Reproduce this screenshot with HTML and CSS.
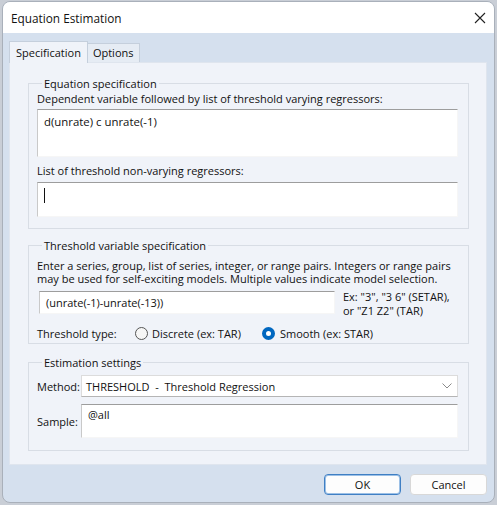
FILE: index.html
```html
<!DOCTYPE html>
<html lang="en">

<head>
    <meta charset="UTF-8">
    <meta name="viewport" content="width=device-width, initial-scale=1.0">
    <title>Equation Estimation</title>
    <link rel="stylesheet" href="styles.css">
</head>

<body>
    <div class="dialog">
        <!-- Title bar -->
        <div class="titlebar">
            <span class="title">Equation Estimation</span>
            <span class="close">
                <svg width="12" height="12" viewBox="0 0 12 12">
                    <path d="M1 1 L11 11 M11 1 L1 11" stroke="#222" stroke-width="1.1" fill="none" />
                </svg>
            </span>
        </div>

        <!-- Tabs -->
        <div class="tabs">
            <div class="tab active">Specification</div>
            <div class="tab">Options</div>
        </div>

        <div class="tab-page">
            <fieldset class="group group-eq">
                <legend>Equation specification</legend>
                <div class="label">Dependent variable followed by list of threshold varying regressors:</div>
                <div class="textbox tall">d(unrate) c unrate(-1)</div>
                <div class="label second">List of threshold non-varying regressors:</div>
                <div class="textbox short"><span class="caret"></span></div>
            </fieldset>

            <fieldset class="group group-thr">
                <legend>Threshold variable specification</legend>
                <div class="desc">Enter a series, group, list of series, integer, or range pairs. Integers or range pairs may be used for self-exciting models. Multiple values indicate model selection.</div>
                <div class="thr-row">
                    <div class="textbox line">(unrate(-1)-unrate(-13))</div>
                    <div class="hint">Ex: "3", "3 6" (SETAR),<br>or "Z1 Z2" (TAR)</div>
                </div>
                <div class="type-row">
                    <span class="type-label">Threshold type:</span>
                    <span class="radio"><span class="dot"></span>Discrete (ex: TAR)</span>
                    <span class="radio checked"><span class="dot"></span>Smooth (ex: STAR)</span>
                </div>
            </fieldset>

            <fieldset class="group group-est">
                <legend>Estimation settings</legend>
                <div class="field-row">
                    <span class="field-label">Method:</span>
                    <div class="select">
                        <span>THRESHOLD &nbsp;- &nbsp;Threshold Regression</span>
                        <svg width="10" height="6" viewBox="0 0 10 6">
                            <path d="M0.5 0.5 L5 5 L9.5 0.5" stroke="#8a8a8a" stroke-width="1" fill="none" />
                        </svg>
                    </div>
                </div>
                <div class="field-row sample-row">
                    <span class="field-label">Sample:</span>
                    <div class="textbox sample">@all</div>
                </div>
            </fieldset>
        </div>

        <div class="buttons">
            <button class="btn default">OK</button>
            <button class="btn">Cancel</button>
        </div>
    </div>
</body>

</html>
```

FILE: styles.css
```css
body {
    margin: 0;
    background-color: #c9ced6;
    font-family: "Open Sans", "Noto Sans", sans-serif;
    font-size: 11px;
    color: #111;
}

.dialog {
    margin: 1px 0 0 2px;
    width: 491px;
    height: 500px;
    border: 1px solid #a9b0ba;
    border-radius: 8px;
    overflow: hidden;
    background-color: #d5e0ee;
    display: flex;
    flex-direction: column;
}

.titlebar {
    height: 31px;
    background-color: #ffffff;
    display: flex;
    justify-content: space-between;
    align-items: center;
    padding: 0 8px 0 8px;
}

.title {
    font-size: 11.8px;
}

.close {
    display: flex;
}

.tabs {
    display: flex;
    align-items: flex-end;
    padding: 8px 0 0 6px;
    height: 21px;
}

.tab {
    padding: 0 5px;
    height: 18px;
    line-height: 18px;
    background-color: #e6ecf4;
    border: 1px solid #c5cfdc;
    border-bottom: none;
    border-left: none;
}

.tab.active {
    height: 21px;
    line-height: 21px;
    padding: 0 6px;
    background-color: #f0f3f9;
    border-left: 1px solid #c5cfdc;
    position: relative;
    z-index: 1;
    margin-bottom: -1px;
}

.tab-page {
    margin: 0 7px 0 6px;
    height: 388px;
    background-color: #f0f3f9;
    border: 1px solid #dfe5ee;
    padding: 13px 17px 0 18px;
}

.group {
    margin: 0 0 9px 0;
    padding: 0 10px 0 8px;
    border: 1px solid #d8dde5;
    min-width: 0;
}

.group legend {
    padding: 0 2px;
    margin-left: 5px;
    font-size: 11px;
    line-height: 15px;
}

.label {
    line-height: 15px;
    margin-top: 0;
}

.label.second {
    margin-top: 6px;
}

.textbox {
    background-color: #ffffff;
    border-top: 1px solid #9d9d9d;
    border-left: 1px solid #c9c9c9;
    border-right: 1px solid #f6f6f6;
    border-bottom: 1px solid #f6f6f6;
    font-size: 11.4px;
    padding: 4px 6px;
}

.textbox.tall {
    margin-top: 3px;
    height: 38px;
}

.textbox.short {
    margin-top: 4px;
    height: 25px;
    margin-bottom: 11px;
}

.caret {
    display: inline-block;
    width: 1px;
    height: 15px;
    background-color: #111;
    vertical-align: middle;
}

.group-thr {
    margin-bottom: 11px;
}

.desc {
    line-height: 13px;
    margin-top: 6px;
}

.thr-row {
    display: flex;
    align-items: flex-start;
    margin-top: 6px;
}

.textbox.line {
    width: 282px;
    height: 13px;
    line-height: 13px;
    margin-left: 2px;
    padding: 4px 6px;
    font-size: 11px;
}

.hint {
    line-height: 14px;
    margin-left: 8px;
    margin-top: -1px;
}

.type-row {
    display: flex;
    align-items: center;
    margin: 6px 0 1px 0;
    height: 18px;
}

.type-label {
    width: 98px;
}

.radio {
    display: flex;
    align-items: center;
    width: 127px;
}

.radio .dot {
    width: 11px;
    height: 11px;
    border: 1px solid #555;
    border-radius: 50%;
    margin-right: 4px;
    background-color: #f6f6f6;
}

.radio.checked .dot {
    width: 5px;
    height: 5px;
    border: 4px solid #0067c0;
    background-color: #ffffff;
    margin-right: 5px;
}

.field-row {
    display: flex;
    align-items: center;
    margin-top: 5px;
}

.field-label {
    width: 44px;
}

.select {
    flex: 1;
    height: 20px;
    background-color: #ffffff;
    border: 1px solid #dcdcdc;
    border-bottom-color: #b5b5b5;
    display: flex;
    align-items: center;
    justify-content: space-between;
    padding: 0 5px 0 4px;
    font-size: 11px;
}

.sample-row {
    margin-top: 7px;
    margin-bottom: 12px;
}

.textbox.sample {
    flex: 1;
    height: 29px;
    padding: 2px 6px 1px 6px;
    font-size: 11px;
}

.buttons {
    display: flex;
    justify-content: flex-end;
    gap: 9px;
    padding: 9px 7px 0 0;
}

.btn {
    width: 77px;
    height: 21px;
    font-family: "Open Sans", "Noto Sans", sans-serif;
    font-size: 11px;
    background-color: #fdfdfd;
    border: 1px solid #d8d8d8;
    border-radius: 4px;
    padding: 0;
    color: #111;
}

.btn.default {
    border: 1px solid #3f7fc4;
    box-shadow: inset 0 0 0 1px #9cc0e6;
}
```
